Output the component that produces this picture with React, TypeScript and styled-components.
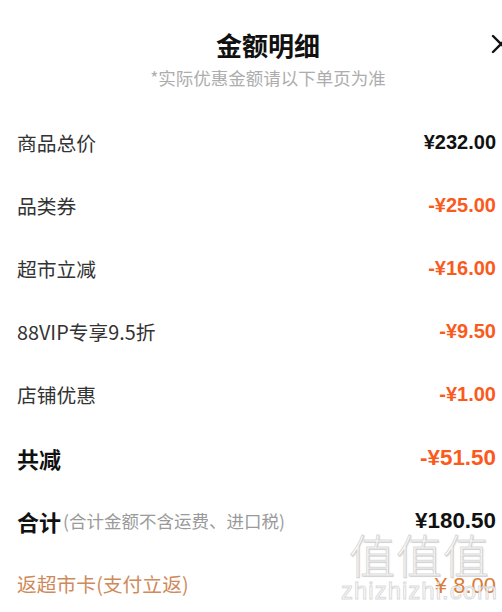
import React from "react";
import styled, { createGlobalStyle } from "styled-components";

const GlobalStyle = createGlobalStyle`
  html, body {
    margin: 0;
    padding: 0;
    background: #fff;
    overflow: hidden;
  }
  body {
    font-family: "Noto Sans CJK SC", "Noto Sans", sans-serif;
  }
`;

const rows = [
  { label: "商品总价", value: "¥232.00", tone: "dark" },
  { label: "品类券", value: "-¥25.00", tone: "orange" },
  { label: "超市立减", value: "-¥16.00", tone: "orange" },
  { label: "88VIP专享9.5折", value: "-¥9.50", tone: "orange" },
  { label: "店铺优惠", value: "-¥1.00", tone: "orange" },
];

const App = () => {
  return (
    <Page>
      <GlobalStyle />
      <Header>
        <Title>金额明细</Title>
        <SubTitle>*实际优惠金额请以下单页为准</SubTitle>
        <CloseButton aria-label="关闭">
          <svg width="22" height="22" viewBox="0 0 22 22">
            <path
              d="M3 3 L19 19 M19 3 L3 19"
              stroke="#111"
              strokeWidth="2.4"
              strokeLinecap="round"
              fill="none"
            />
          </svg>
        </CloseButton>
      </Header>
      <List>
        {rows.map((row) => (
          <Row key={row.label}>
            <Label>{row.label}</Label>
            <Value $tone={row.tone}>{row.value}</Value>
          </Row>
        ))}
        <Row>
          <Label $strong>共减</Label>
          <Value $tone="orange" $big>
            -¥51.50
          </Value>
        </Row>
        <Row>
          <Label $strong>
            合计<Note>(合计金额不含运费、进口税)</Note>
          </Label>
          <Value $tone="dark" $big>
            ¥180.50
          </Value>
        </Row>
        <Row>
          <RebateLabel>返超市卡(支付立返)</RebateLabel>
          <RebateValue>¥ 8.00</RebateValue>
          <Watermark aria-hidden="true">
            <WatermarkMark>值值值</WatermarkMark>
            <WatermarkSite>zhizhizhi.com</WatermarkSite>
          </Watermark>
        </Row>
      </List>
    </Page>
  );
};

export default App;

const Page = styled.div`
  width: 502px;
  height: 612px;
  overflow: hidden;
  background: #fff;
`;

const Header = styled.header`
  position: relative;
  height: 111px;
  padding-left: 34px;
  box-sizing: border-box;
  display: flex;
  flex-direction: column;
  align-items: center;
  padding-top: 27px;
`;

const Title = styled.h2`
  margin: 0;
  font-size: 26px;
  line-height: 36px;
  font-weight: 700;
  color: #111;
`;

const SubTitle = styled.p`
  margin: 0;
  margin-top: 2px;
  font-size: 17.5px;
  line-height: 26px;
  color: #adadad;
`;

const CloseButton = styled.button`
  position: absolute;
  top: 33px;
  left: 490px;
  border: 0;
  padding: 0;
  background: none;
  line-height: 0;
`;

const List = styled.div`
  display: flex;
  flex-direction: column;
`;

const Row = styled.div`
  position: relative;
  height: 63px;
  display: flex;
  align-items: center;
  justify-content: space-between;
  padding: 0 6px 0 17px;
`;

const Label = styled.span<{ $strong?: boolean }>`
  font-size: ${({ $strong }) => ($strong ? "22px" : "19.8px")};
  font-weight: ${({ $strong }) => ($strong ? 700 : 400)};
  color: ${({ $strong }) => ($strong ? "#111" : "#333")};
  display: flex;
  align-items: center;
`;

const Note = styled.span`
  font-size: 17.5px;
  font-weight: 400;
  color: #9a9a9a;
  margin-left: 2px;
`;

const Value = styled.span<{ $tone: string; $big?: boolean }>`
  font-family: "Liberation Sans", Arial, sans-serif;
  font-weight: 700;
  font-size: ${({ $big }) => ($big ? "22.4px" : "20px")};
  color: ${({ $tone }) => ($tone === "orange" ? "#fa5a1c" : "#111")};
`;

const RebateLabel = styled.span`
  font-size: 19.8px;
  color: #cf8a5c;
`;

const RebateValue = styled.span`
  font-family: "Liberation Sans", Arial, sans-serif;
  font-size: 22px;
  color: #dd7b35;
  padding-top: 4px;
`;

const Watermark = styled.div`
  position: absolute;
  right: 4px;
  top: -24px;
  display: flex;
  flex-direction: column;
  align-items: center;
  pointer-events: none;
`;

const WatermarkMark = styled.span`
  font-size: 46px;
  line-height: 50px;
  font-weight: 300;
  letter-spacing: 1px;
  color: rgba(255, 255, 255, 0.8);
  -webkit-text-stroke: 1px rgba(180, 180, 180, 0.5);
  text-shadow: 1px 1px 1px rgba(150, 150, 150, 0.3);
`;

const WatermarkSite = styled.span`
  font-family: "Liberation Sans", Arial, sans-serif;
  font-size: 24px;
  line-height: 26px;
  letter-spacing: 1px;
  color: rgba(255, 255, 255, 0.8);
  -webkit-text-stroke: 1px rgba(180, 180, 180, 0.5);
`;
